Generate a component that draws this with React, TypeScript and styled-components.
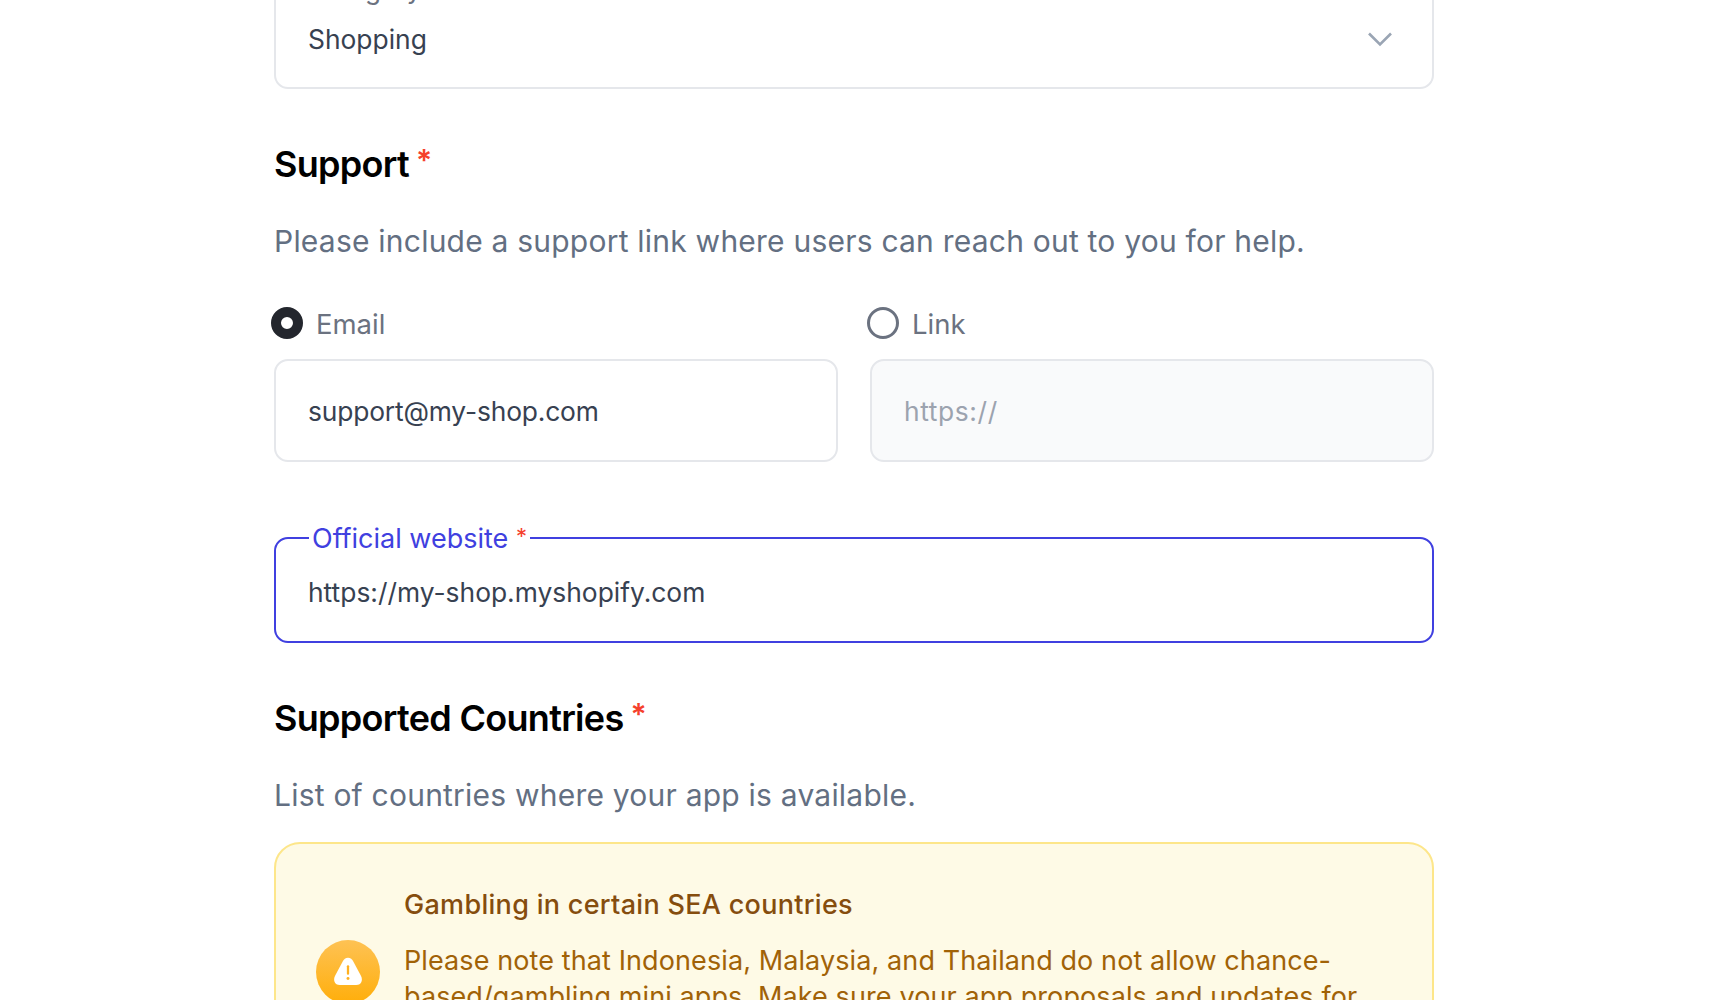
import styled, { createGlobalStyle } from 'styled-components';

const GlobalStyle = createGlobalStyle`
  html, body {
    margin: 0;
    height: 1000px;
    overflow: hidden;
    background: #fff;
    font-family: Inter, "Liberation Sans", sans-serif;
  }
  * { box-sizing: border-box; }
`;

export default function App() {
  return (
    <>
      <GlobalStyle />
      <Page>
        <SelectBox>
          <SelectLabel>Category</SelectLabel>
          <SelectRow>
            <FieldText>Shopping</FieldText>
            <svg width="26" height="16" viewBox="0 0 26 16" fill="none">
              <path d="M2 2.5 13 13.5 24 2.5" stroke="#9aa5b4" strokeWidth="2.6" />
            </svg>
          </SelectRow>
        </SelectBox>

        <Heading $top={49}>
          Support<Star>*</Star>
        </Heading>
        <Description>Please include a support link where users can reach out to you for help.</Description>

        <OptionGrid>
          <Option>
            <RadioRow>
              <Radio $checked />
              <RadioLabel>Email</RadioLabel>
            </RadioRow>
            <InputBox>
              <EmailText>support@my-shop.com</EmailText>
            </InputBox>
          </Option>
          <Option>
            <RadioRow>
              <Radio />
              <RadioLabel>Link</RadioLabel>
            </RadioRow>
            <InputBox $disabled>
              <Placeholder>https://</Placeholder>
            </InputBox>
          </Option>
        </OptionGrid>

        <Fieldset>
          <Legend>
            Official website <LegendStar>*</LegendStar>
          </Legend>
          <FieldText>https://my-shop.myshopify.com</FieldText>
        </Fieldset>

        <Heading $top={49}>
          Supported Countries<Star>*</Star>
        </Heading>
        <Description>List of countries where your app is available.</Description>

        <Warning>
          <WarningIcon>
            <svg width="34" height="34" viewBox="0 0 30 30">
              <path
                d="M15 2.5c2.2 0 3.6 1.3 4.8 3.4l6.6 12.4c1.9 3.6.6 8.2-4.2 8.2H7.8c-4.8 0-6.1-4.6-4.2-8.2L10.2 5.9C11.4 3.8 12.8 2.5 15 2.5Z"
                fill="#fff"
              />
              <rect x="14" y="9" width="2" height="8.5" rx="1" fill="#ffb020" />
              <circle cx="15" cy="20.8" r="1.3" fill="#ffb020" />
            </svg>
          </WarningIcon>
          <WarningBody>
            <WarningTitle>Gambling in certain SEA countries</WarningTitle>
            <WarningText>
              Please note that Indonesia, Malaysia, and Thailand do not allow chance-based/gambling mini apps. Make sure
              your app proposals and updates for these countries comply with the local rules.
            </WarningText>
          </WarningBody>
        </Warning>
      </Page>
    </>
  );
}

const Page = styled.div`
  width: 1160px;
  margin-left: 274px;
  margin-top: -30px;
`;

const SelectBox = styled.div`
  height: 119px;
  border: 2px solid #e5e7eb;
  border-radius: 14px;
  padding: 4px 32px 0;
`;

const SelectLabel = styled.div`
  font-size: 26px;
  line-height: 28px;
  color: #6b7280;
`;

const SelectRow = styled.div`
  display: flex;
  align-items: center;
  justify-content: space-between;
  margin-top: 17px;
  padding-right: 7px;
`;

const FieldText = styled.div`
  font-size: 26.4px;
  line-height: 36px;
  color: #374151;
`;

const EmailText = styled(FieldText)`
  letter-spacing: -0.17px;
`;

const Placeholder = styled(FieldText)`
  letter-spacing: 0.6px;
  color: #9ca3af;
`;

const Heading = styled.h2<{ $top: number }>`
  margin: ${(p) => p.$top}px 0 0;
  font-size: 36px;
  line-height: 44px;
  font-weight: 600;
  letter-spacing: -0.7px;
  color: #000;
`;

const Star = styled.span`
  margin-left: 7px;
  color: #f5402c;
  font-size: 30px;
  vertical-align: 6px;
`;

const Description = styled.p`
  margin: 35px 0 0;
  font-size: 30px;
  line-height: 40px;
  letter-spacing: 0.22px;
  color: #636f82;
`;

const OptionGrid = styled.div`
  display: grid;
  grid-template-columns: 1fr 1fr;
  gap: 32px;
  margin-top: 42px;
`;

const Option = styled.div`
  display: flex;
  flex-direction: column;
`;

const RadioRow = styled.div`
  display: flex;
  align-items: center;
  gap: 13px;
  height: 40px;
  margin-left: -3px;
`;

const Radio = styled.span<{ $checked?: boolean }>`
  width: 32px;
  height: 32px;
  border-radius: 50%;
  background: #fff;
  border: ${(p) => (p.$checked ? '10.5px solid #23262d' : '3px solid #6b7280')};
`;

const RadioLabel = styled.span`
  margin-top: 2px;
  font-size: 27.5px;
  line-height: 36px;
  color: #6b7280;
`;

const InputBox = styled.div<{ $disabled?: boolean }>`
  display: flex;
  align-items: center;
  height: 103px;
  margin-top: 16px;
  padding: 0 32px;
  border: 2px solid #e5e7eb;
  border-radius: 14px;
  background: ${(p) => (p.$disabled ? '#f9fafb' : '#fff')};
`;

const Fieldset = styled.fieldset`
  margin: 58px 0 0;
  height: 123px;
  padding: 19px 32px 0;
  border: 2px solid #4040e0;
  border-radius: 14px;
`;

const Legend = styled.legend`
  margin-left: 1px;
  padding: 0 3px;
  font-size: 27px;
  line-height: 32px;
  color: #4040e0;
`;

const LegendStar = styled.span`
  color: #f5402c;
  font-size: 22px;
  vertical-align: 4px;
`;

const Warning = styled.div`
  display: flex;
  align-items: center;
  gap: 24px;
  margin-top: 27px;
  padding: 43px 32px 51px 40px;
  border: 2px solid #fde68a;
  border-radius: 26px;
  background: #fefae6;
`;

const WarningIcon = styled.div`
  flex: none;
  display: flex;
  align-items: center;
  justify-content: center;
  width: 64px;
  height: 64px;
  margin-top: 5px;
  border-radius: 50%;
  background: linear-gradient(#fec254, #ffae0a);
`;

const WarningBody = styled.div`
  display: flex;
  flex-direction: column;
  gap: 20px;
`;

const WarningTitle = styled.div`
  font-size: 27px;
  line-height: 36px;
  font-weight: 500;
  letter-spacing: 0.3px;
  color: #854d0e;
`;

const WarningText = styled.div`
  font-size: 27px;
  line-height: 36px;
  letter-spacing: 0.1px;
  color: #a16207;
`;
